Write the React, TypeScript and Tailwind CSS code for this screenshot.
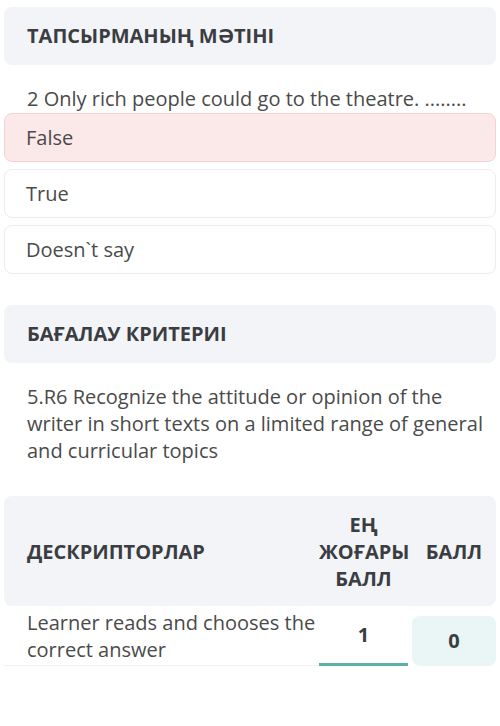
import React from "react";

const options = [
  { label: "False", wrong: true },
  { label: "True", wrong: false },
  { label: "Doesn`t say", wrong: false },
];

const SectionHeader = ({ title }: { title: string }) => (
  <div className="h-[58px] rounded-lg bg-[#f3f4f7] pl-[23px] flex items-center">
    <h2 className="text-[20px] font-bold text-[#3a3d42] leading-none">{title}</h2>
  </div>
);

export default function App() {
  return (
    <div
      className="w-[500px] min-h-[726px] bg-white px-[4px] pt-[7px] text-[#4a4a4a]"
      style={{ fontFamily: '"Open Sans", "Noto Sans", sans-serif' }}
    >
      {/* Task text */}
      <SectionHeader title="ТАПСЫРМАНЫҢ МӘТІНІ" />
      <p className="mt-[20px] pl-[23px] text-[20px] leading-[27px]">
        2 Only rich people could go to the theatre. ........
      </p>

      {/* Answer options */}
      <div className="mt-[1px] flex flex-col gap-[7px]">
        {options.map((o) => (
          <div
            key={o.label}
            className={
              o.wrong
                ? "h-[49px] rounded-lg border border-[#f1d3d5] bg-[#fbe9ea] pl-[21px] flex items-center text-[20px]"
                : "h-[49px] rounded-lg border border-[#ececee] bg-white pl-[21px] flex items-center text-[20px]"
            }
          >
            {o.label}
          </div>
        ))}
      </div>

      {/* Assessment criteria */}
      <div className="mt-[31px]">
        <SectionHeader title="БАҒАЛАУ КРИТЕРИІ" />
      </div>
      <p className="mt-[20px] pl-[23px] pr-[6px] text-[20px] leading-[27px]">
        5.R6 Recognize the attitude or opinion of the writer in short texts on a limited range of general and
        curricular topics
      </p>

      {/* Descriptors table */}
      <div className="mt-[32px]">
        <div className="h-[110px] rounded-lg bg-[#f3f4f7] flex items-center text-[20px] font-bold text-[#3a3d42] leading-[27px]">
          <div className="flex-1 pl-[23px]">ДЕСКРИПТОРЛАР</div>
          <div className="w-[89px] text-center">
            ЕҢ
            <br />
            ЖОҒАРЫ
            <br />
            БАЛЛ
          </div>
          <div className="w-[84px] ml-[4px] text-center">БАЛЛ</div>
        </div>
        <div className="flex items-stretch h-[60px]">
          <div className="flex-1 pl-[23px] pt-[3px] text-[20px] leading-[27px] border-b border-[#f2f2f4]">
            Learner reads and chooses the correct answer
          </div>
          <div className="w-[89px] flex items-center justify-center border-b-[3px] border-[#5fb0aa] text-[20px] font-bold text-[#3a3d42]">
            1
          </div>
          <div className="w-[84px] ml-[4px] mt-[10px] rounded-lg bg-[#eaf5f5] flex items-center justify-center text-[20px] font-bold text-[#3a3d42]">
            0
          </div>
        </div>
      </div>
    </div>
  );
}
